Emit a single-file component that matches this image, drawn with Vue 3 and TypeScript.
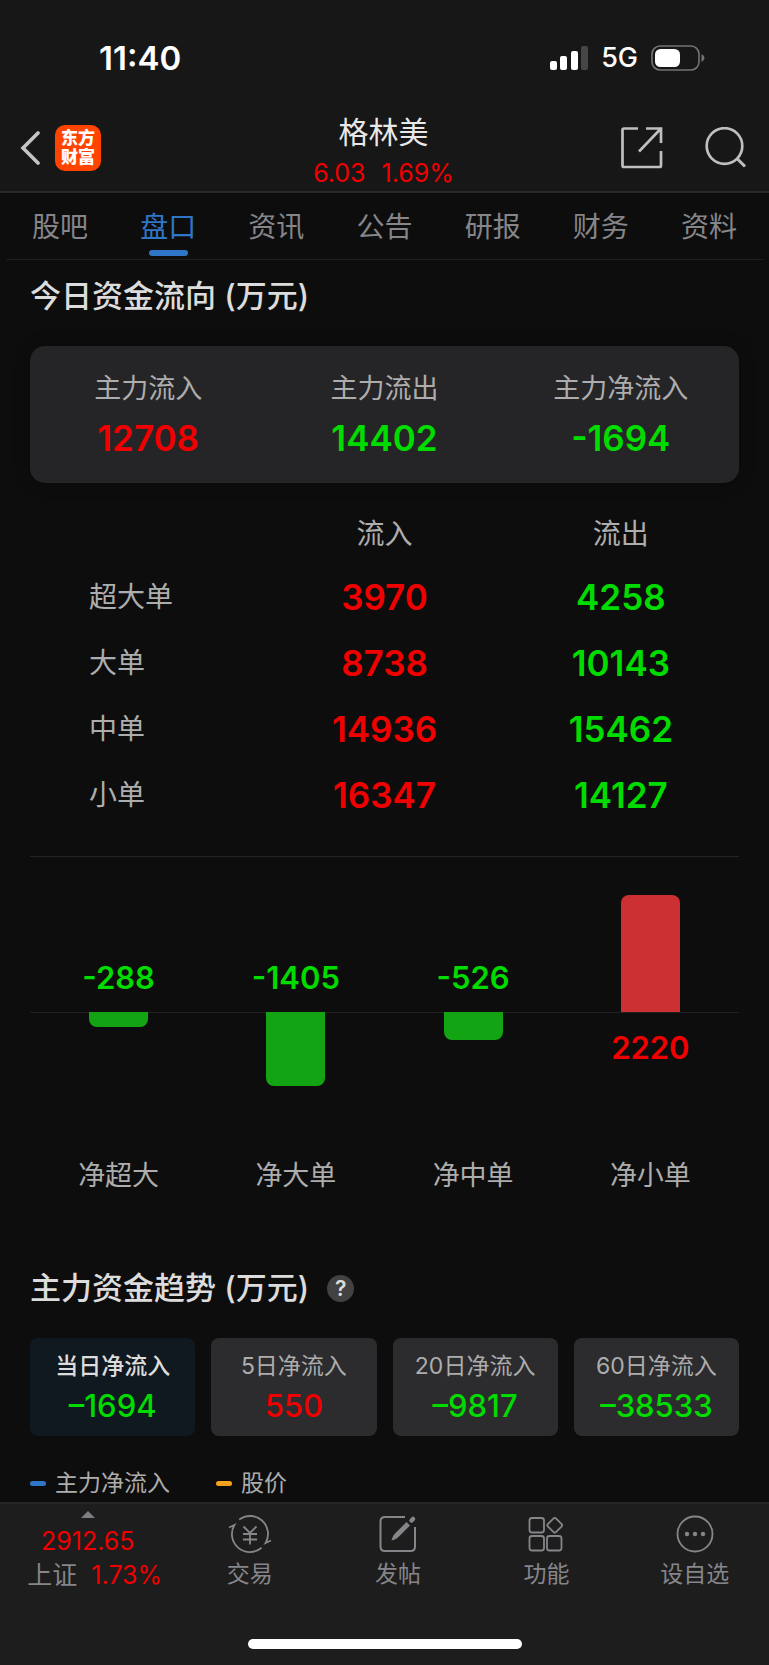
<script setup lang="ts">
import { ref } from 'vue'

interface Order { name: string; inflow: number; outflow: number }
interface Bar { label: string; value: number }
interface Period { label: string; value: number }

const tabs: string[] = ['股吧', '盘口', '资讯', '公告', '研报', '财务', '资料']
const activeTab = ref<string>('盘口')

const summary = [
  { label: '主力流入', value: 12708, tone: 'up' },
  { label: '主力流出', value: 14402, tone: 'down' },
  { label: '主力净流入', value: -1694, tone: 'down' },
]

const orders: Order[] = [
  { name: '超大单', inflow: 3970, outflow: 4258 },
  { name: '大单', inflow: 8738, outflow: 10143 },
  { name: '中单', inflow: 14936, outflow: 15462 },
  { name: '小单', inflow: 16347, outflow: 14127 },
]

const bars: Bar[] = [
  { label: '净超大', value: -288 },
  { label: '净大单', value: -1405 },
  { label: '净中单', value: -526 },
  { label: '净小单', value: 2220 },
]
const peak = Math.max(...bars.map((b) => Math.abs(b.value)))
const barHeight = (v: number): string => `${Math.round((Math.abs(v) / peak) * 117)}px`

const periods: Period[] = [
  { label: '当日净流入', value: -1694 },
  { label: '5日净流入', value: 550 },
  { label: '20日净流入', value: -9817 },
  { label: '60日净流入', value: -38533 },
]
const activePeriod = ref<number>(0)

const tone = (v: number): string => (v < 0 ? 'down' : 'up')
const signed = (v: number): string => (v < 0 ? `–${Math.abs(v)}` : `${v}`)
</script>

<template>
  <div class="app">
    <header class="top">
      <div class="status">
        <span class="clock">11:40</span>
        <div class="status-right">
          <svg class="signal" viewBox="0 0 38 24" aria-hidden="true">
            <rect x="0" y="15" width="7" height="9" rx="2" fill="#fff" />
            <rect x="10" y="10" width="7" height="14" rx="2" fill="#fff" />
            <rect x="21" y="5" width="7" height="19" rx="2" fill="#fff" />
            <rect x="31" y="0" width="7" height="24" rx="2" fill="#464646" />
          </svg>
          <span class="network">5G</span>
          <svg class="battery" viewBox="0 0 54 26" aria-hidden="true">
            <rect x="1" y="1" width="47" height="24" rx="8" fill="none" stroke="#747474" stroke-width="1.6" />
            <rect x="4" y="4" width="25" height="18" rx="5.5" fill="#fff" />
            <path d="M50.5 9 Q53.5 10.5 53.5 13 T50.5 17 Z" fill="#747474" />
          </svg>
        </div>
      </div>
      <div class="title-bar">
        <div class="left">
          <button class="icon-btn" aria-label="返回">
            <svg class="back" viewBox="0 0 20 34"><path d="M18 2 L3 17 L18 32" fill="none" stroke="#c4c4c4" stroke-width="3.6" stroke-linecap="round" stroke-linejoin="miter" /></svg>
          </button>
          <div class="logo"><span>东方</span><span>财富</span></div>
        </div>
        <div class="stock">
          <h1>格林美</h1>
          <p class="up"><span>6.03</span><span>1.69%</span></p>
        </div>
        <div class="right">
          <button class="icon-btn" aria-label="分享">
            <svg class="share" viewBox="0 0 42 42">
              <path d="M17 1.5 H3 Q1.5 1.5 1.5 3 V38.5 Q1.5 40 3 40 H38.5 Q40 40 40 38.5 V24 M25 1.5 H40 V16 M39.5 2 L18 24.5" fill="none" stroke="#bfbfbf" stroke-width="2.7" />
            </svg>
          </button>
          <button class="icon-btn" aria-label="搜索">
            <svg class="search" viewBox="0 0 42 42"><circle cx="19.5" cy="19" r="17.8" fill="none" stroke="#bfbfbf" stroke-width="2.7" /><path d="M32 31.5 L40 39.5" stroke="#bfbfbf" stroke-width="3" /></svg>
          </button>
        </div>
      </div>
    </header>

    <nav class="tabs">
      <button v-for="t in tabs" :key="t" :class="{ active: t === activeTab }" @click="activeTab = t">{{ t }}</button>
    </nav>

    <main>
      <h2>今日资金流向 (万元)</h2>
      <dl class="summary">
        <div v-for="s in summary" :key="s.label">
          <dt>{{ s.label }}</dt>
          <dd :class="s.tone">{{ s.value }}</dd>
        </div>
      </dl>

      <table>
        <thead>
          <tr><td></td><th scope="col">流入</th><th scope="col">流出</th></tr>
        </thead>
        <tbody>
          <tr v-for="o in orders" :key="o.name">
            <th scope="row">{{ o.name }}</th>
            <td class="up">{{ o.inflow }}</td>
            <td class="down">{{ o.outflow }}</td>
          </tr>
        </tbody>
      </table>

      <div class="chart">
        <div v-for="b in bars" :key="b.label" class="col">
          <div class="half above">
            <span v-if="b.value < 0" class="val down">{{ b.value }}</span>
            <span v-else class="bar bar-up" :style="{ height: barHeight(b.value) }"></span>
          </div>
          <div class="half below">
            <span v-if="b.value < 0" class="bar bar-down" :style="{ height: barHeight(b.value) }"></span>
            <span v-else class="val up">{{ b.value }}</span>
          </div>
          <span class="cat">{{ b.label }}</span>
        </div>
      </div>

      <div class="trend-head">
        <h2>主力资金趋势 (万元)</h2>
        <button class="help" aria-label="说明">?</button>
      </div>
      <div class="periods">
        <button
          v-for="(p, i) in periods"
          :key="p.label"
          :class="{ active: i === activePeriod }"
          :aria-pressed="i === activePeriod"
          @click="activePeriod = i"
        >
          <span class="p-label">{{ p.label }}</span>
          <span class="p-value" :class="tone(p.value)">{{ signed(p.value) }}</span>
        </button>
      </div>
      <div class="legend">
        <span class="net">主力净流入</span>
        <span class="price">股价</span>
      </div>
    </main>

    <footer>
      <div class="actions">
        <button class="index">
          <svg class="caret" viewBox="0 0 14 7" aria-hidden="true"><path d="M7 0 L14 7 H0 Z" fill="#7d7d82" /></svg>
          <span class="up">2912.65</span>
          <span class="index-row">上证<span class="up">1.73%</span></span>
        </button>
        <button>
          <svg viewBox="0 0 44 40" fill="none" stroke="#85858a" stroke-width="1.8">
            <path d="M11.2 5.6 A18 18 0 0 1 37.6 29 L43 26.5" />
            <path d="M33.6 33.8 A18 18 0 0 1 6.4 11 L1 13.5" />
            <path d="M15.5 12.5 L22 19 L28.5 12.5 M22 19 V30.5 M15 20 H29 M15 25.5 H29" />
          </svg>
          <span>交易</span>
        </button>
        <button>
          <svg viewBox="0 0 44 40" fill="none" stroke="#85858a" stroke-width="2">
            <path d="M29 3 H9 Q4.5 3 4.5 7.5 V32.5 Q4.5 37 9 37 H34.5 Q39 37 39 32.5 V13" />
            <path d="M15.5 26.5 C16.5 22.5 17.5 21 19.5 19 L30.5 8 L34 11.5 L23 22.5 C21 24.5 19.5 25.5 15.5 26.5 Z" fill="#85858a" stroke="none" />
            <path d="M35.5 6.5 L37 5" stroke-width="4.5" stroke-linecap="round" />
          </svg>
          <span>发帖</span>
        </button>
        <button>
          <svg viewBox="0 0 44 40" fill="none" stroke="#85858a" stroke-width="1.8">
            <rect x="5.5" y="4" width="14.5" height="14.5" rx="2.5" />
            <rect x="5.5" y="22" width="14.5" height="14.5" rx="2.5" />
            <rect x="23" y="22" width="14.5" height="14.5" rx="2.5" />
            <rect x="25" y="5.5" width="11.5" height="11.5" rx="2" transform="rotate(45 30.75 11.25)" />
          </svg>
          <span>功能</span>
        </button>
        <button>
          <svg viewBox="0 0 44 40" fill="none" stroke="#85858a" stroke-width="1.8">
            <circle cx="22" cy="20" r="17.5" />
            <g fill="#85858a" stroke="none"><circle cx="14" cy="20" r="2.2" /><circle cx="22" cy="20" r="2.2" /><circle cx="30" cy="20" r="2.2" /></g>
          </svg>
          <span>设自选</span>
        </button>
      </div>
      <div class="home"></div>
    </footer>
  </div>
</template>

<style>
body { background: #0d0d0d; }
</style>

<style scoped>
.app {
  display: flex;
  flex-direction: column;
  min-height: 100vh;
  background: #0d0d0d;
  color: #adadad;
  font-family: Inter, "Noto Sans CJK SC", sans-serif;
}
button {
  padding: 0;
  border: 0;
  background: none;
  color: inherit;
  font-family: inherit;
  cursor: pointer;
}
h1, h2, p, dl, dd { margin: 0; }
svg { display: block; }
.up { color: #f00000; }
.down { color: #00dc00; }

.top { background: #171717; border-bottom: 2px solid #28282a; }
.status {
  display: flex;
  justify-content: space-between;
  align-items: center;
  height: 115px;
  padding: 0 64px 0 99px;
  box-sizing: border-box;
  color: #fff;
}
.clock { font-size: 33px; font-weight: 600; }
.status-right { display: flex; align-items: center; gap: 13px; }
.signal { width: 38px; height: 24px; }
.network { font-size: 27px; font-weight: 500; }
.battery { width: 54px; height: 26px; }

.title-bar {
  display: grid;
  grid-template-columns: 1fr auto 1fr;
  height: 76px;
  padding: 0 22px 0 20px;
}
.left, .right { display: flex; align-items: center; height: 66px; }
.left { gap: 15px; }
.right { justify-content: flex-end; gap: 42px; }
.back { width: 20px; height: 34px; }
.share, .search { width: 42px; height: 42px; }
.logo {
  display: flex;
  flex-direction: column;
  align-items: center;
  justify-content: center;
  width: 46px;
  height: 46px;
  border-radius: 10px;
  background: #ff4400;
  color: #fff;
  font-size: 17px;
  font-weight: 900;
  line-height: 19px;
}
.stock { text-align: center; }
h1 { font-size: 30px; font-weight: 400; line-height: 34px; color: #e8e8e8; }
.stock p {
  display: flex;
  justify-content: center;
  gap: 16px;
  font-size: 25px;
  line-height: 48px;
}

.tabs {
  display: flex;
  margin: 0 6px;
  border-bottom: 1px solid #1d1d1d;
}
.tabs button {
  flex: 1;
  display: flex;
  flex-direction: column;
  align-items: center;
  height: 66px;
  font-size: 28px;
  line-height: 68px;
  color: #85858a;
}
.tabs .active { color: #2f76c8; }
.tabs .active::after {
  content: "";
  flex: none;
  width: 39px;
  height: 6px;
  margin-top: -11px;
  border-radius: 3px;
  background: #2f76c8;
}

main { padding: 0 30px; }
h2 { font-size: 31px; font-weight: 500; line-height: 46px; color: #dcdcdc; }
main > h2 { padding: 13px 0 27px; }
.summary {
  display: flex;
  padding: 23px 0 16px;
  border-radius: 15px;
  background: #252527;
  box-shadow: 0 0 16px rgba(0, 0, 0, 0.25);
  text-align: center;
}
.summary div { flex: 1; }
dt { font-size: 27px; line-height: 40px; }
dd { font-size: 35px; font-weight: 600; line-height: 58px; }

table {
  width: 100%;
  margin-top: 21px;
  border-collapse: collapse;
  table-layout: fixed;
}
th { height: 66px; padding: 0; font-size: 28px; font-weight: 400; line-height: 40px; }
thead th { height: 60px; }
tbody th { padding-left: 59px; text-align: left; }
td { padding: 0; font-size: 35px; font-weight: 600; line-height: 40px; text-align: center; }

.chart {
  display: flex;
  margin-top: 28px;
  border-top: 1px solid #242424;
}
.col { flex: 1; display: flex; flex-direction: column; }
.half { display: flex; flex-direction: column; align-items: center; }
.above { justify-content: flex-end; height: 155px; }
.below { height: 138px; border-top: 1px solid #202020; }
.bar { width: 59px; }
.bar-up { border-radius: 8px 8px 0 0; background: #cd3032; }
.bar-down { margin-top: -1px; border-radius: 0 0 8px 8px; background: #13a413; }
.val { font-size: 31px; font-weight: 600; line-height: 69px; }
.cat { font-size: 27px; line-height: 50px; text-align: center; }

.trend-head { display: flex; align-items: center; gap: 18px; margin-top: 64px; }
.help {
  width: 27px;
  height: 27px;
  border-radius: 50%;
  background: #424242;
  color: #dcdcdc;
  font-size: 21px;
  font-weight: 600;
  line-height: 27px;
}
.periods { display: flex; gap: 16px; margin-top: 27px; }
.periods button {
  flex: 1 1 0;
  display: flex;
  flex-direction: column;
  align-items: center;
  padding: 9px 0;
  border-radius: 8px;
  background: #2c2c2e;
}
.periods .active { background: #101820; }
.p-label { font-size: 23px; line-height: 38px; white-space: nowrap; }
.active .p-label { color: #dcdcdc; font-weight: 500; }
.p-value { font-size: 31px; font-weight: 500; line-height: 42px; }

.legend { display: flex; gap: 46px; margin-top: 28px; font-size: 23px; line-height: 38px; }
.legend span { display: flex; align-items: center; gap: 9px; }
.legend span::before { content: ""; width: 16px; height: 5px; border-radius: 3px; }
.net::before { background: #2f76c8; }
.price::before { background: #f9a11e; }

footer {
  display: flex;
  flex-direction: column;
  align-items: center;
  margin-top: auto;
  padding-bottom: 16px;
  border-top: 2px solid #262626;
  background: #1d1d1d;
}
.actions {
  display: grid;
  grid-template-columns: 175fr repeat(4, 148fr);
  width: 100%;
  height: 135px;
}
.actions button {
  display: flex;
  flex-direction: column;
  align-items: center;
  padding-top: 10px;
  font-size: 23px;
  line-height: 40px;
  color: #85858a;
}
.actions svg { width: 44px; height: 40px; }
.actions .index { padding-top: 7px; font-size: 25px; line-height: 34px; }
.actions .caret { width: 14px; height: 7px; margin-bottom: 6px; }
.index-row { display: flex; gap: 14px; padding-left: 14px; }
.home { width: 274px; height: 10px; border-radius: 5px; background: #fff; }
</style>
